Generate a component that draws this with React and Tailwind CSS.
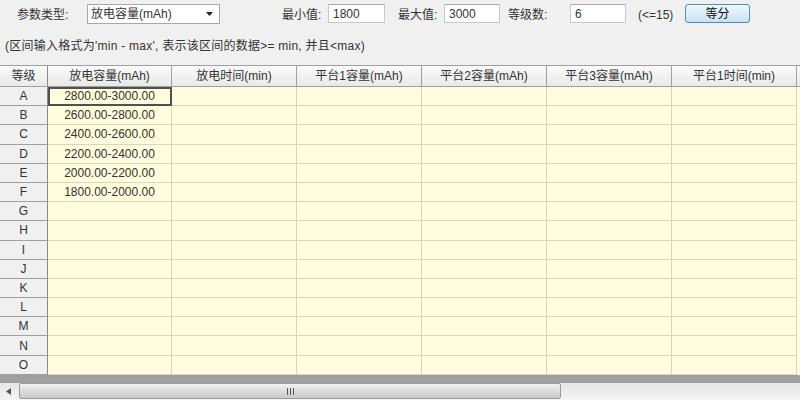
import React from 'react';

const FONT = { fontFamily: '"Liberation Sans", "Noto Sans CJK SC", sans-serif' };

const columns = ['放电容量(mAh)', '放电时间(min)', '平台1容量(mAh)', '平台2容量(mAh)', '平台3容量(mAh)', '平台1时间(min)'];
const grades = ['A', 'B', 'C', 'D', 'E', 'F', 'G', 'H', 'I', 'J', 'K', 'L', 'M', 'N', 'O'];
const ranges = ['2800.00-3000.00', '2600.00-2800.00', '2400.00-2600.00', '2200.00-2400.00', '2000.00-2200.00', '1800.00-2000.00'];

const Field = ({ value, className }) => (
  <div className={`h-[19px] bg-white border border-[#c9c9c9] border-t-[#a9a9a9] px-[4px] flex items-center text-[12px] text-[#333] ${className}`}>
    {value}
  </div>
);

const App = () => {
  return (
    <div className="w-[800px] h-[400px] bg-[#f0f0f0] overflow-hidden flex flex-col text-[#333]" style={FONT}>
      {/* toolbar */}
      <div className="h-[65px] flex flex-col">
        <div className="h-[28px] pt-[4px] flex items-start text-[12px]">
          <span className="ml-[17px] mt-[2px] w-[70px]">参数类型:</span>
          <div className="w-[133px] h-[20px] bg-white border border-[#a8a8a8] flex items-center justify-between pl-[3px] pr-[6px]">
            <span className="text-[12px]">放电容量(mAh)</span>
            <svg width="7" height="4" viewBox="0 0 7 4"><path d="M0 0h7L3.5 4z" fill="#222" /></svg>
          </div>
          <span className="ml-[62px] mt-[2px] w-[46px]">最小值:</span>
          <Field value="1800" className="w-[57px]" />
          <span className="ml-[13px] mt-[2px] w-[46px]">最大值:</span>
          <Field value="3000" className="w-[56px]" />
          <span className="ml-[8px] mt-[2px] w-[62px]">等级数:</span>
          <Field value="6" className="w-[56px]" />
          <span className="ml-[12px] mt-[2px] w-[47px]">(&lt;=15)</span>
          <button className="w-[65px] h-[19px] rounded-[3px] border border-[#4f8fb8] bg-gradient-to-b from-[#eef7fc] to-[#c9e3f3] text-[12px] text-[#111] flex items-center justify-center">
            等分
          </button>
        </div>
        <div className="ml-[5px] mt-[9px] text-[12px] tracking-[0.25px]">
          (区间输入格式为'min - max', 表示该区间的数据&gt;= min, 并且&lt;max)
        </div>
      </div>

      {/* grid */}
      <div className="h-[310px] bg-[#fffddd] overflow-hidden border-t border-[#a0a0a0] text-[12px]">
        <div className="flex h-[21px] bg-gradient-to-b from-[#fafafa] to-[#e9e9e9] border-b border-[#a0a0a0]">
          <div className="w-[48px] shrink-0 flex items-center justify-center border-r border-[#8a8a8a]">等级</div>
          {columns.map((c, i) => (
            <div key={c} className={`${i === 0 ? 'w-[124px]' : 'w-[125px]'} shrink-0 flex items-center justify-center border-r border-[#a0a0a0]`}>
              {c}
            </div>
          ))}
          <div className="w-[10px] shrink-0" />
        </div>
        {grades.map((g, r) => (
          <div key={g} className="flex h-[19.2px]">
            <div className="w-[48px] shrink-0 flex items-center justify-center bg-[#f0f0f0] border-r border-[#8a8a8a] border-b border-b-[#a0a0a0]">
              {g}
            </div>
            {columns.map((c, i) => (
              <div
                key={c}
                className={`${i === 0 ? 'w-[124px]' : 'w-[125px]'} shrink-0 flex items-center justify-center border-r border-b border-[#d9d6bd] ${
                  r === 0 && i === 0 ? 'outline-2 outline-[#505050] -outline-offset-2' : ''
                }`}
              >
                {i === 0 ? ranges[r] || '' : ''}
              </div>
            ))}
          </div>
        ))}
      </div>

      {/* horizontal scrollbar */}
      <div className="h-[8px] bg-[#a0a0a0]" />
      <div className="h-[17px] flex bg-gradient-to-b from-[#e6e6e6] to-[#f4f4f4]">
        <div className="w-[17px] flex items-center justify-center">
          <svg width="5" height="7" viewBox="0 0 5 7"><path d="M5 0v7L0 3.5z" fill="#555" /></svg>
        </div>
        <div className="ml-[2px] w-[542px] h-[16px] rounded-[2px] border border-[#9a9a9a] bg-gradient-to-b from-[#f3f3f3] via-[#dcdcdc] to-[#c9c9c9] flex items-center justify-center">
          <div className="flex gap-[2px]">
            <div className="w-[1px] h-[7px] bg-[#555]" />
            <div className="w-[1px] h-[7px] bg-[#555]" />
            <div className="w-[1px] h-[7px] bg-[#555]" />
          </div>
        </div>
      </div>
    </div>
  );
};

export default App;
